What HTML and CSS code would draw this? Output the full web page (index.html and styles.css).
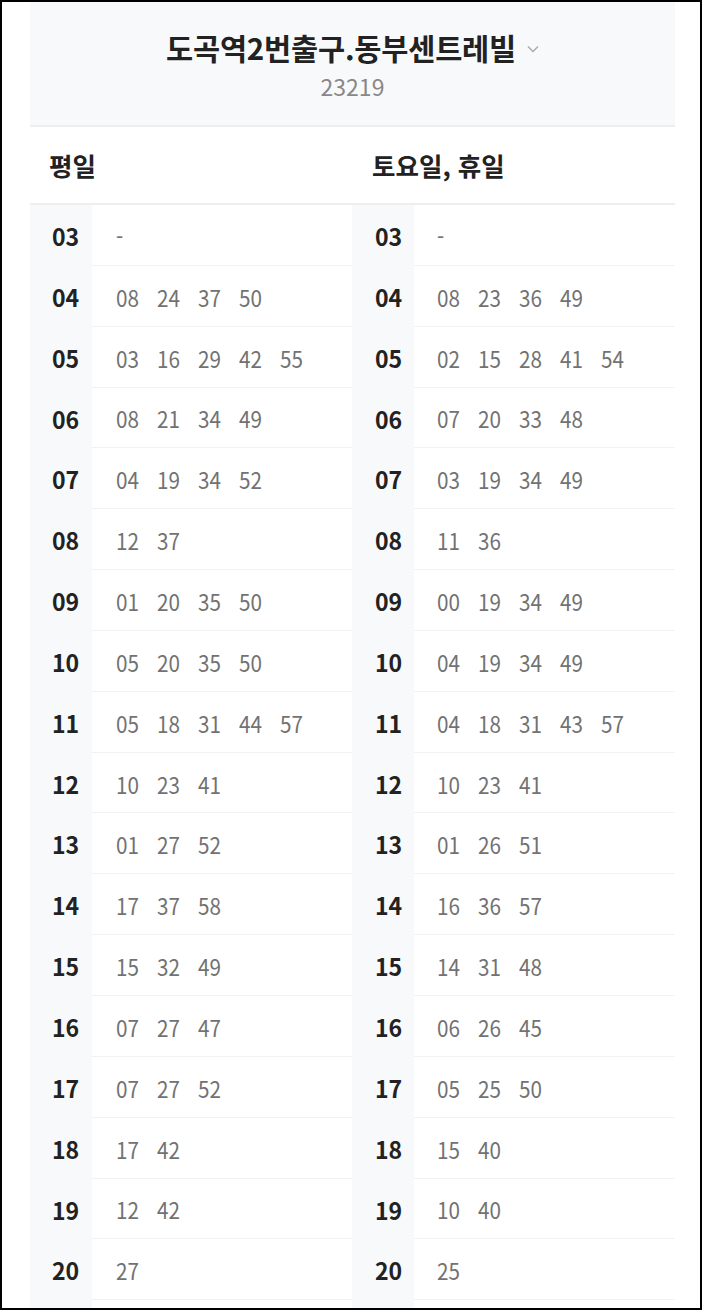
FILE: index.html
```html
<!DOCTYPE html>
<html lang="ko">
<head>
<meta charset="utf-8">
<link rel="stylesheet" href="styles.css">
</head>
<body>
<div class="frame">
  <div class="sheet">
    <header class="head">
      <h1 class="title"><span class="name">도곡역2번출구.동부센트레빌</span><svg class="chev" width="12" height="8" viewBox="0 0 12 8"><path d="M1 1.5 L6 6.5 L11 1.5" fill="none" stroke="#aaa" stroke-width="1.4"/></svg></h1>
      <div class="code">23219</div>
    </header>
    <div class="cols">
      <section class="col">
        <h2 class="colhead">평일</h2>
        <div class="rows" id="weekday"></div>
      </section>
      <section class="col">
        <h2 class="colhead">토요일, 휴일</h2>
        <div class="rows" id="holiday"></div>
      </section>
    </div>
  </div>
</div>
<script src="app.js"></script>
</body>
</html>
```

FILE: app.js
```js
var weekday = [
  ["03", ["-"]],
  ["04", ["08","24","37","50"]],
  ["05", ["03","16","29","42","55"]],
  ["06", ["08","21","34","49"]],
  ["07", ["04","19","34","52"]],
  ["08", ["12","37"]],
  ["09", ["01","20","35","50"]],
  ["10", ["05","20","35","50"]],
  ["11", ["05","18","31","44","57"]],
  ["12", ["10","23","41"]],
  ["13", ["01","27","52"]],
  ["14", ["17","37","58"]],
  ["15", ["15","32","49"]],
  ["16", ["07","27","47"]],
  ["17", ["07","27","52"]],
  ["18", ["17","42"]],
  ["19", ["12","42"]],
  ["20", ["27"]],
  ["", []]
];
var holiday = [
  ["03", ["-"]],
  ["04", ["08","23","36","49"]],
  ["05", ["02","15","28","41","54"]],
  ["06", ["07","20","33","48"]],
  ["07", ["03","19","34","49"]],
  ["08", ["11","36"]],
  ["09", ["00","19","34","49"]],
  ["10", ["04","19","34","49"]],
  ["11", ["04","18","31","43","57"]],
  ["12", ["10","23","41"]],
  ["13", ["01","26","51"]],
  ["14", ["16","36","57"]],
  ["15", ["14","31","48"]],
  ["16", ["06","26","45"]],
  ["17", ["05","25","50"]],
  ["18", ["15","40"]],
  ["19", ["10","40"]],
  ["20", ["25"]],
  ["", []]
];
function fill(id, data) {
  var box = document.getElementById(id);
  data.forEach(function (r) {
    var row = document.createElement("div");
    row.className = "row";
    var h = document.createElement("div");
    h.className = "hour";
    var hs = document.createElement("span");
    hs.className = "hnum";
    hs.textContent = r[0];
    h.appendChild(hs);
    var m = document.createElement("div");
    m.className = "mins";
    r[1].forEach(function (v) {
      var s = document.createElement("span");
      s.className = "min";
      s.textContent = v;
      m.appendChild(s);
    });
    row.appendChild(h);
    row.appendChild(m);
    box.appendChild(row);
  });
}
fill("weekday", weekday);
fill("holiday", holiday);
```

FILE: styles.css
```css
html, body {
  margin: 0;
  padding: 0;
  background: #fff;
}
body {
  font-family: "Noto Sans CJK KR", "Noto Sans", sans-serif;
}
.frame {
  box-sizing: border-box;
  width: 702px;
  height: 1310px;
  border: 2px solid #000;
  overflow: hidden;
  background: #fff;
}
.sheet {
  margin-left: 28px;
  width: 645px;
}
.head {
  box-sizing: border-box;
  height: 125px;
  background: #f8f9fa;
  border-bottom: 2px solid #eceef0;
  text-align: center;
  padding-top: 25px;
}
.title {
  margin: 0;
  font-size: 29.5px;
  line-height: 40px;
  font-weight: 700;
  color: #222;
  display: flex;
  justify-content: center;
  align-items: center;
  gap: 11px;
  letter-spacing: -0.2px;
}
.chev {
  margin-top: 4px;
}
.code {
  font-size: 23px;
  line-height: 32px;
  color: #888;
  margin-top: 3px;
}
.cols {
  display: grid;
  grid-template-columns: 322px 323px;
}
.colhead {
  margin: 0;
  height: 78px;
  box-sizing: border-box;
  border-bottom: 2px solid #eceef0;
  padding-left: 19px;
  padding-top: 1px;
  font-size: 25.5px;
  font-weight: 700;
  color: #222;
  line-height: 74px;
}
.col + .col .colhead {
  padding-left: 20px;
}
.row {
  display: flex;
  height: 60.85px;
}
.hour {
  width: 62px;
  flex: none;
  box-sizing: border-box;
  padding-left: 22px;
  padding-top: 2px;
  background: #f8f9fb;
  font-size: 24px;
  font-weight: 700;
  color: #222;
  line-height: 58px;
}
.hnum {
  display: inline-block;
  transform: scaleX(0.96);
  transform-origin: left center;
}
.mins {
  flex: 1;
  box-sizing: border-box;
  border-bottom: 1px solid #f1f2f4;
  padding-left: 24px;
  padding-top: 2px;
  display: flex;
  align-items: center;
  font-size: 23.5px;
  color: #727272;
  line-height: 56px;
}
.min {
  display: inline-block;
  width: 41px;
  flex: none;
  transform: scaleX(0.88);
  transform-origin: left center;
}
.col + .col .hour {
  padding-left: 23px;
}
.col + .col .mins {
  padding-left: 23px;
}
```
